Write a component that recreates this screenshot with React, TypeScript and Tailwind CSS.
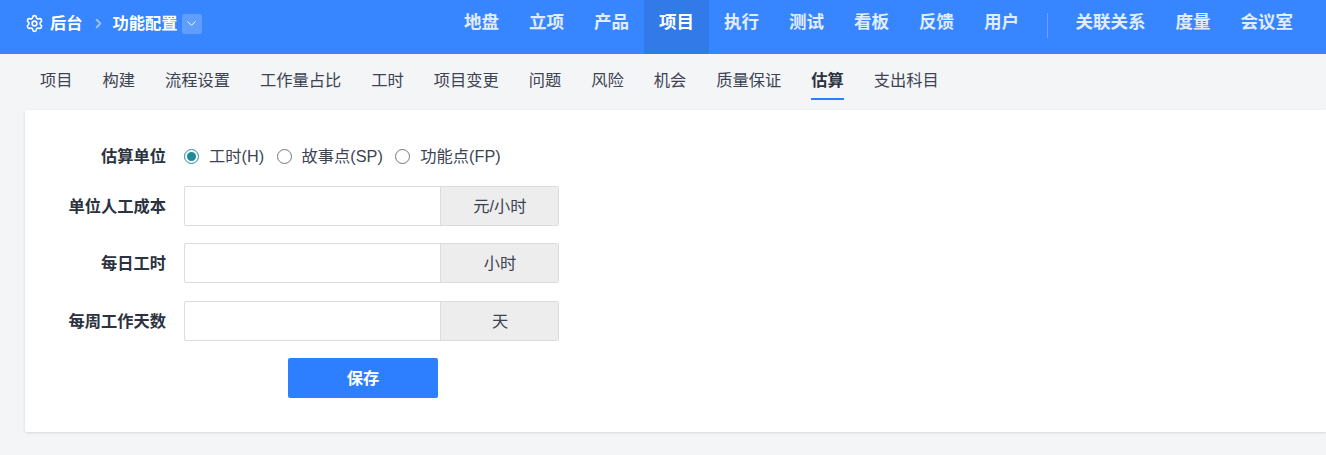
import { Settings, ChevronRight, ChevronDown } from "lucide-react";

const mainNav = ["地盘", "立项", "产品", "项目", "执行", "测试", "看板", "反馈", "用户"];
const extraNav = ["关联关系", "度量", "会议室"];
const subNav = ["项目", "构建", "流程设置", "工作量占比", "工时", "项目变更", "问题", "风险", "机会", "质量保证", "估算", "支出科目"];
const units = [
  { label: "工时(H)", checked: true },
  { label: "故事点(SP)", checked: false },
  { label: "功能点(FP)", checked: false },
];
const fields = [
  { label: "单位人工成本", unit: "元/小时" },
  { label: "每日工时", unit: "小时" },
  { label: "每周工作天数", unit: "天" },
];

function Radio({ label, checked }: { label: string; checked: boolean }) {
  return (
    <label className="flex items-center">
      <span className={`flex h-[15px] w-[15px] items-center justify-center rounded-full border ${checked ? "border-[#1f8a9c]" : "border-[#767676]"}`}>
        {checked && <span className="h-[9px] w-[9px] rounded-full bg-[#1f8a9c]" />}
      </span>
      <span className="ml-[10px] text-[16.25px] text-[#3c4353]">{label}</span>
    </label>
  );
}

export default function App() {
  return (
    <div className="h-[455px] overflow-hidden bg-[#f4f5f7] font-['Liberation_Sans','Noto_Sans_CJK_SC',sans-serif]">
      {/* Top bar */}
      <header className="flex h-[54px] items-stretch justify-between bg-[#3785ff] text-white">
        <div className="flex h-[47px] items-center pl-[25px] text-[16.25px] font-bold">
          <Settings className="h-[19px] w-[19px]" strokeWidth={2} />
          <span className="ml-[6px]">后台</span>
          <ChevronRight className="ml-[8px] h-[15px] w-[15px] text-white/50" strokeWidth={3} />
          <span className="ml-[7px]">功能配置</span>
          <span className="ml-[4px] flex h-[20px] w-[20px] items-center justify-center rounded-[2px] bg-white/20">
            <ChevronDown className="h-[15px] w-[15px]" strokeWidth={1.5} />
          </span>
        </div>
        <nav className="flex items-stretch pr-[18px] text-[17.5px] font-bold">
          {mainNav.map((item) => (
            <a key={item} className={`px-[15px] pt-[9px] ${item === "项目" ? "bg-[#327ae8] text-white" : "text-white/85"}`}>
              {item}
            </a>
          ))}
          <div className="ml-[12.5px] mr-[13px] mt-[13px] h-[25px] w-px bg-white/25" />
          {extraNav.map((item) => (
            <a key={item} className="px-[15px] pt-[9px] text-white/85">
              {item}
            </a>
          ))}
        </nav>
      </header>

      {/* Sub navigation */}
      <nav className="flex h-[46px] gap-[30px] pl-[40px] pt-[14px] text-[16.25px] text-[#3c4353]">
        {subNav.map((item) => (
          <a key={item} className={item === "估算" ? "h-[32px] border-b-2 border-[#2e7fff] font-bold text-[#2b3240]" : ""}>
            {item}
          </a>
        ))}
      </nav>

      {/* Form card */}
      <main className="ml-[25px] mt-[10px] h-[322px] rounded-l-[2px] bg-white pt-[36px] shadow-[0_1px_3px_rgba(0,0,0,0.12)]">
        <div className="flex h-[20px] items-center">
          <span className="w-[141px] text-right text-[16.25px] font-bold text-[#2b3240]">估算单位</span>
          <div className="ml-[18px] flex items-center gap-[12.5px]">
            {units.map((u) => (
              <Radio key={u.label} {...u} />
            ))}
          </div>
        </div>
        <div className="mt-[20px] flex flex-col gap-[17.4px]">
          {fields.map((f) => (
            <div key={f.label} className="flex items-center">
              <span className="w-[141px] text-right text-[16.25px] font-bold text-[#2b3240]">{f.label}</span>
              <div className="ml-[18px] flex h-[40px] w-[375px] rounded-[2px] border border-[#dcdcdc]">
                <input className="min-w-0 flex-1 outline-none" />
                <span className="flex w-[118px] items-center justify-center border-l border-[#dcdcdc] bg-[#ededed] pl-[1px] text-[16.25px] text-[#3c4353]">{f.unit}</span>
              </div>
            </div>
          ))}
        </div>
        <button className="ml-[263px] mt-[17px] h-[40px] w-[150px] rounded-[2px] bg-[#2e7fff] text-[16.25px] font-bold text-white">保存</button>
      </main>
    </div>
  );
}
